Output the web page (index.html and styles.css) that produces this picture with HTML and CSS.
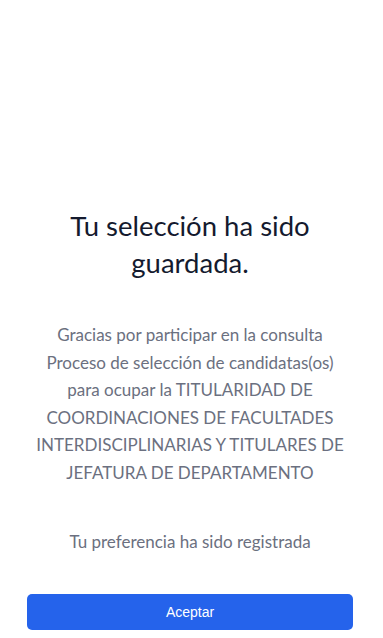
FILE: index.html
```html
<!DOCTYPE html>
<html lang="es">
<head>
  <meta charset="UTF-8">
  <meta name="viewport" content="width=device-width, initial-scale=1.0">
  <title>Selección guardada</title>
  <link rel="stylesheet" href="styles.css">
</head>
<body>
  <div class="page">
    <div class="message">
      <h1 class="title">Tu selección ha sido guardada.</h1>
      <p class="thanks">Gracias por participar en la consulta Proceso de selección de candidatas(os) para ocupar la TITULARIDAD DE COORDINACIONES DE FACULTADES INTERDISCIPLINARIAS Y TITULARES DE JEFATURA DE DEPARTAMENTO</p>
      <p class="registered">Tu preferencia ha sido registrada</p>
    </div>
    <button class="accept-btn" id="acceptBtn">Aceptar</button>
  </div>
</body>
</html>
```

FILE: styles.css
```css
html, body {
  margin: 0;
  padding: 0;
  background: #ffffff;
}
body {
  font-family: Lato, "Open Sans", Arial, sans-serif;
}
.page {
  box-sizing: border-box;
  height: 638px;
  display: flex;
  flex-direction: column;
  padding: 0 30px 8px 27px;
}
.message {
  flex: 1;
  display: flex;
  flex-direction: column;
  justify-content: flex-end;
  text-align: center;
  padding-bottom: 40px;
}
.title {
  margin: 0 0 40px 0;
  font-size: 27.5px;
  font-weight: 400;
  line-height: 37px;
  color: #141a2e;
  padding: 0 30px;
}
.thanks {
  margin: 0 0 44px 0;
  padding: 0 6px;
  font-size: 17px;
  line-height: 27.5px;
  color: #6b7080;
}
.registered {
  margin: 0;
  font-size: 17px;
  line-height: 24px;
  color: #6b7080;
}
.accept-btn {
  height: 36px;
  width: 100%;
  border: 0;
  border-radius: 5px;
  background-color: #2563eb;
  color: #ffffff;
  font-family: "Liberation Sans", Arial, sans-serif;
  font-size: 14px;
  cursor: pointer;
}
```
